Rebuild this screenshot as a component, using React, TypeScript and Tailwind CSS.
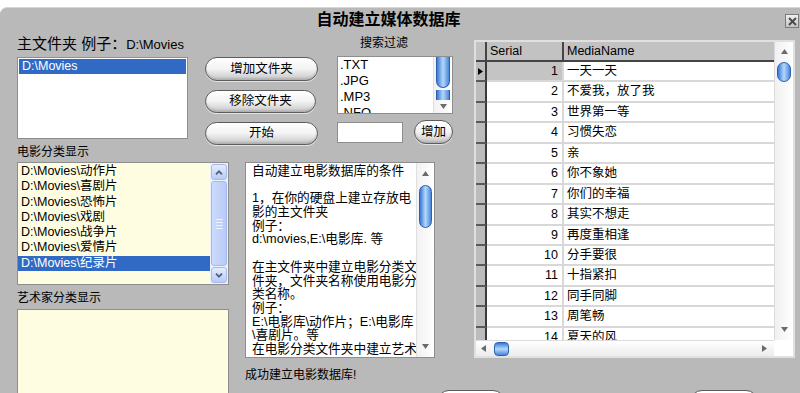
import React from "react";

function Tri({ dir, color = "#6b6b6b" }: { dir: "up" | "down" | "left" | "right"; color?: string }) {
  const vertical = dir === "up" || dir === "down";
  const w = vertical ? 7 : 5;
  const h = vertical ? 5 : 7;
  const pts = {
    up: "0,5 3.5,0 7,5",
    down: "0,0 7,0 3.5,5",
    left: "5,0 5,7 0,3.5",
    right: "0,0 0,7 5,3.5",
  }[dir];
  return (
    <svg width={w} height={h} viewBox={`0 0 ${w} ${h}`}>
      <polygon points={pts} fill={color} />
    </svg>
  );
}

function Pill({ label, className }: { label: string; className: string }) {
  return (
    <div
      className={`flex shrink-0 items-center justify-center rounded-full border border-[#5c5c5c] bg-linear-to-b from-white via-[#f3f3f3] to-[#c6c6c6] text-[12.5px] text-black shadow-[inset_0_-2px_2px_rgba(0,0,0,0.12),0_1px_0_rgba(255,255,255,0.6)] ${className}`}
    >
      {label}
    </div>
  );
}

function Chevron({ up }: { up: boolean }) {
  return (
    <svg width="8" height="5" viewBox="0 0 8 5">
      <polyline
        points={up ? "1,4.3 4,1.3 7,4.3" : "1,0.7 4,3.7 7,0.7"}
        fill="none"
        stroke="#4d6185"
        strokeWidth="1.8"
      />
    </svg>
  );
}

const rows = [
  "一天一天",
  "不爱我，放了我",
  "世界第一等",
  "习惯失恋",
  "亲",
  "你不象她",
  "你们的幸福",
  "其实不想走",
  "再度重相逢",
  "分手要很",
  "十指紧扣",
  "同手同脚",
  "周笔畅",
  "夏天的风",
];

const categories = ["动作片", "喜剧片", "恐怖片", "戏剧", "战争片", "爱情片", "纪录片"];

const textLines = [
  "自动建立电影数据库的条件",
  " ",
  "1，在你的硬盘上建立存放电",
  "影的主文件夹",
  "例子：",
  "d:\\movies,E:\\电影库. 等",
  " ",
  "在主文件夹中建立电影分类文",
  "件夹，文件夹名称使用电影分",
  "类名称。",
  "例子：",
  "E:\\电影库\\动作片；E:\\电影库",
  "\\喜剧片。等",
  "在电影分类文件夹中建立艺术",
];

export default function App() {
  return (
    <div className="h-[393px] w-[800px] overflow-hidden bg-white font-['Liberation_Sans','Noto_Sans_CJK_SC',sans-serif] text-black">
      <div className="mt-[7px] h-[386px] overflow-hidden rounded-tl-[7px] border-t border-[#d6d6d6] bg-[#b9b9b9]">
        {/* title bar */}
        <div className="flex h-[23px] items-center">
          <div className="flex-1 pr-[8px] text-center text-[16px] font-bold leading-[23px]">自动建立媒体数据库</div>
          <div className="mr-[1px] mt-[3px] flex h-[14px] w-[14px] items-center justify-center border border-[#7a7a7a] bg-linear-to-b from-[#f0f0f0] to-[#c4c4c4]">
            <svg width="9" height="9" viewBox="0 0 9 9">
              <line x1="1" y1="1" x2="8" y2="8" stroke="#4a4a4a" strokeWidth="2" />
              <line x1="8" y1="1" x2="1" y2="8" stroke="#4a4a4a" strokeWidth="2" />
            </svg>
          </div>
        </div>

        <div className="flex">
          {/* left area */}
          <div className="flex w-[474px] shrink-0 flex-col">
            {/* top */}
            <div className="flex h-[113px]">
              <div className="ml-[17px] flex w-[171px] shrink-0 flex-col">
                <div className="mt-[4px] h-[18px] whitespace-nowrap leading-[18px]">
                  <span className="text-[15px]">主文件夹 例子：</span>
                  <span className="text-[13px]">D:\Movies</span>
                </div>
                <div className="mt-[4px] h-[82px] border border-[#8e8e8e] bg-white p-[1px]">
                  <div className="h-[15px] bg-[#316ac5] pl-[3px] text-[12.5px] leading-[15px] text-white">D:\Movies</div>
                </div>
              </div>

              <div className="ml-[17px] flex w-[113px] shrink-0 flex-col">
                <Pill label="增加文件夹" className="mt-[26px] h-[24px] w-[113px]" />
                <Pill label="移除文件夹" className="mt-[9px] h-[23px] w-[111px]" />
                <Pill label="开始" className="mt-[9px] h-[23px] w-[113px]" />
              </div>

              <div className="ml-[19px] flex w-[118px] shrink-0 flex-col">
                <div className="mt-[4px] h-[16px] pl-[23px] text-[12px] leading-[16px]">搜索过滤</div>
                <div className="mt-[5px] flex h-[58px] w-[116px] border border-[#8e8e8e] bg-white">
                  <div className="flex-1 overflow-hidden pl-[2px] text-[13px] leading-[16px]">
                    <div>.TXT</div>
                    <div>.JPG</div>
                    <div>.MP3</div>
                    <div>.NFO</div>
                  </div>
                  <div className="flex w-[19px] flex-col border-l border-[#e0e0e0] bg-linear-to-r from-[#f2f2f2] to-white">
                    <div className="mx-[2px] h-[31px] rounded-b-[7px] border border-t-0 border-[#2c5fae] bg-linear-to-r from-[#3a78d2] via-[#b4d8fc] to-[#4a86da]" />
                    <div className="mx-[2px] mt-[2px] h-[10px] border-x border-[#2c5fae] bg-linear-to-r from-[#3a78d2] via-[#b4d8fc] to-[#4a86da]" />
                    <div className="flex flex-1 items-center justify-center">
                      <Tri dir="down" />
                    </div>
                  </div>
                </div>
                <div className="mt-[6px] flex h-[25px] items-center">
                  <div className="h-[21px] w-[66px] border border-[#8e8e8e] bg-white" />
                  <Pill label="增加" className="ml-[11px] h-[24px] w-[39px]" />
                </div>
              </div>
            </div>

            {/* bottom */}
            <div className="flex">
              <div className="ml-[17px] flex w-[212px] shrink-0 flex-col">
                <div className="h-[16px] text-[12px] leading-[16px]">电影分类显示</div>
                <div className="mt-[2px] flex h-[123px] border border-[#8e8e8e] bg-[#fffde1]">
                  <div className="flex-1 pt-[1px] text-[12.5px] leading-[15.3px]">
                    {categories.map((c, i) => (
                      <div
                        key={c}
                        className={i === 6 ? "h-[15.3px] bg-[#316ac5] pl-[3px] text-white" : "h-[15.3px] pl-[3px]"}
                      >
                        D:\Movies\{c}
                      </div>
                    ))}
                  </div>
                  <div className="flex w-[18px] flex-col gap-[1px] bg-[#eef2fc] p-[1px]">
                    <div className="flex h-[16px] items-center justify-center rounded-[3px] border border-[#a6b9ea] bg-linear-to-b from-[#e4ecfd] to-[#b9cbf6]">
                      <Chevron up />
                    </div>
                    <div className="flex flex-1 flex-col items-center justify-center gap-[2px] rounded-[3px] border border-[#a4b8ef] bg-linear-to-r from-[#cddbfc] to-[#b8cbf7]">
                      <div className="h-[1px] w-[7px] bg-[#eef3fe]" />
                      <div className="h-[1px] w-[7px] bg-[#eef3fe]" />
                      <div className="h-[1px] w-[7px] bg-[#eef3fe]" />
                      <div className="h-[1px] w-[7px] bg-[#eef3fe]" />
                    </div>
                    <div className="flex h-[16px] items-center justify-center rounded-[3px] border border-[#a6b9ea] bg-linear-to-b from-[#e4ecfd] to-[#b9cbf6]">
                      <Chevron up={false} />
                    </div>
                  </div>
                </div>
                <div className="mt-[5px] h-[16px] text-[12px] leading-[16px]">艺术家分类显示</div>
                <div className="mt-[3px] h-[100px] border border-[#8e8e8e] bg-[#fffde1]" />
              </div>

              <div className="ml-[16px] flex w-[190px] shrink-0 flex-col">
                <div className="mt-[18px] flex h-[196px] border border-[#8e8e8e] bg-white">
                  <div className="flex-1 overflow-hidden whitespace-pre pl-[6px] pt-[2px] text-[12.7px] leading-[13.7px]">
                    {textLines.map((l, i) => (
                      <div key={i} className="h-[13.7px]">
                        {l}
                      </div>
                    ))}
                  </div>
                  <div className="flex w-[18px] flex-col border-l border-[#e0e0e0] bg-linear-to-r from-[#f2f2f2] to-white">
                    <div className="flex h-[20px] items-center justify-center">
                      <Tri dir="up" />
                    </div>
                    <div className="mx-[2px] mt-[2px] h-[43px] rounded-[7px] border border-[#2c5fae] bg-linear-to-r from-[#3a78d2] via-[#b4d8fc] to-[#4a86da]" />
                    <div className="flex-1" />
                    <div className="flex h-[22px] items-center justify-center">
                      <Tri dir="down" />
                    </div>
                  </div>
                </div>
                <div className="mt-[9px] h-[16px] whitespace-nowrap text-[12px] leading-[16px]">成功建立电影数据库!</div>
                <div className="mt-[7px] flex h-[24px]">
                  <Pill label="" className="ml-[192px] h-[24px] w-[68px]" />
                </div>
              </div>
            </div>
          </div>

          {/* grid column */}
          <div className="flex shrink-0 flex-col">
            <div className="mt-[9px] flex h-[318px] w-[321px] flex-col border-2 border-[#e0e0e0] bg-white">
              <div className="flex h-[298px]">
                <div className="flex w-[298px] flex-col overflow-hidden text-[12.5px]">
                  <div className="flex h-[20px] shrink-0 border-b-2 border-[#454545] bg-[#c2c2c2] leading-[19px]">
                    <div className="w-[11px] border-r-2 border-[#454545]" />
                    <div className="w-[77px] border-r-2 border-[#454545] pl-[3px]">Serial</div>
                    <div className="flex-1 pl-[3px]">MediaName</div>
                  </div>
                  <div className="flex-1 overflow-hidden">
                    {rows.map((r, i) => (
                      <div key={i} className="flex h-[20.45px]">
                        <div className="flex w-[11px] items-center justify-center border-b-2 border-r-2 border-b-[#5a5a5a] border-r-[#3a3a3a] bg-[#bcbcbc]">
                          {i === 0 ? <Tri dir="right" color="#000" /> : null}
                        </div>
                        <div
                          className={
                            i === 0
                              ? "w-[77px] border-b-2 border-r-2 border-[#d8d8d8] bg-[#c4c4c4] pr-[4px] text-right leading-[18.5px]"
                              : "w-[77px] border-b-2 border-r-2 border-[#d8d8d8] pr-[4px] text-right leading-[18.5px]"
                          }
                        >
                          {i + 1}
                        </div>
                        <div className="flex-1 whitespace-nowrap border-b-2 border-[#d8d8d8] pl-[3px] leading-[18.5px]">{r}</div>
                      </div>
                    ))}
                  </div>
                </div>
                <div className="flex w-[19px] flex-col border-l border-[#dcdcdc] bg-linear-to-r from-[#f0f0f0] to-white">
                  <div className="flex h-[18px] items-center justify-center">
                    <Tri dir="up" />
                  </div>
                  <div className="mx-[2px] mt-[2px] h-[20px] rounded-[7px] border border-[#2c5fae] bg-linear-to-r from-[#3a78d2] via-[#b4d8fc] to-[#4a86da]" />
                  <div className="flex-1" />
                  <div className="flex h-[22px] items-center justify-center">
                    <Tri dir="down" />
                  </div>
                </div>
              </div>
              <div className="flex h-[16px]">
                <div className="flex w-[298px] items-center border-t border-[#dcdcdc] bg-linear-to-b from-white to-[#ececec]">
                  <div className="flex w-[14px] justify-center">
                    <Tri dir="left" />
                  </div>
                  <div className="ml-[4px] h-[14px] w-[15px] rounded-[4px] border border-[#2c5fae] bg-linear-to-b from-[#3a78d2] via-[#b4d8fc] to-[#4a86da]" />
                  <div className="flex-1" />
                  <div className="flex w-[20px] justify-center">
                    <Tri dir="right" />
                  </div>
                </div>
                <div className="w-[19px] bg-white" />
              </div>
            </div>
            <div className="mt-[32px] flex h-[24px]">
              <Pill label="" className="ml-[216px] h-[24px] w-[68px]" />
            </div>
          </div>
        </div>
      </div>
    </div>
  );
}
